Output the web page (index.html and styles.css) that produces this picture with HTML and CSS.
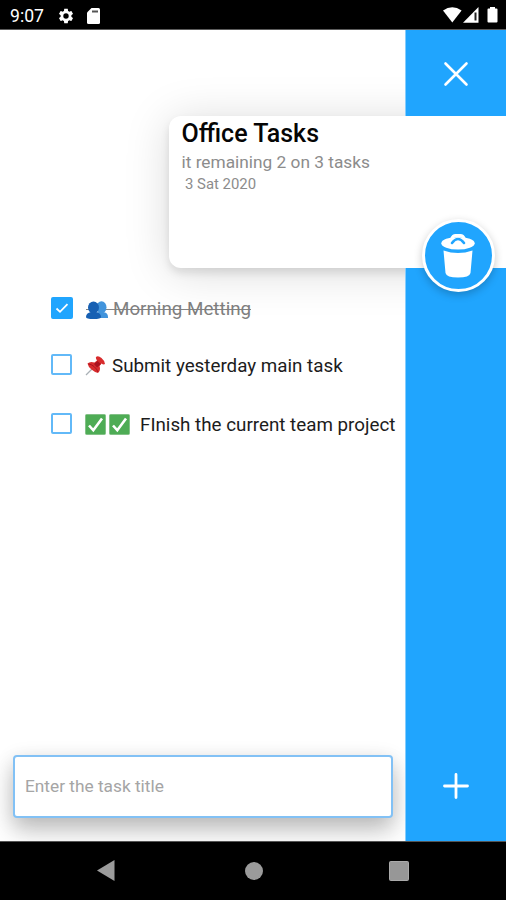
FILE: index.html
```html
<!DOCTYPE html>
<html lang="en">
<head>
<meta charset="utf-8">
<title>Office Tasks</title>
<link rel="stylesheet" href="styles.css">
</head>
<body>
<header class="status">
  <span class="clock">9:07</span>
  <svg class="gear" width="18" height="18" viewBox="0 0 24 24"><path fill="#fff" d="M19.14 12.94c.04-.3.06-.61.06-.94s-.02-.64-.07-.94l2.03-1.58c.18-.14.23-.41.12-.61l-1.92-3.32c-.12-.22-.37-.29-.59-.22l-2.39.96c-.5-.38-1.03-.7-1.62-.94L14.4 2.81c-.04-.24-.24-.41-.48-.41h-3.84c-.24 0-.43.17-.47.41l-.36 2.54c-.59.24-1.13.57-1.62.94l-2.39-.96c-.22-.08-.47 0-.59.22L2.74 8.87c-.12.21-.08.47.12.61l2.03 1.58c-.05.3-.09.63-.09.94s.02.64.07.94l-2.03 1.58c-.18.14-.23.41-.12.61l1.92 3.32c.12.22.37.29.59.22l2.39-.96c.5.38 1.03.7 1.62.94l.36 2.54c.05.24.24.41.48.41h3.84c.24 0 .44-.17.47-.41l.36-2.54c.59-.24 1.13-.56 1.62-.94l2.39.96c.22.08.47 0 .59-.22l1.92-3.32c.12-.22.07-.47-.12-.61zM12 15.6A3.6 3.6 0 1 1 12 8.4a3.6 3.6 0 0 1 0 7.2z"/></svg>
  <svg class="sd" width="13" height="16" viewBox="0 0 13 16"><path fill="#fff" d="M4.500 0h7Q13 0 13 1.500v13Q13 16 11.500 16h-10Q0 16 0 14.500V4.500z"/><path d="M5 3.500h6" stroke="#555" stroke-width="2"/></svg>
  <svg class="signals" width="55" height="17" viewBox="0 0 55 17"><path fill="#fff" d="M0 3.500Q9.300-3 18.600 3.500L9.300 15.500z"/><path fill="#fff" d="M20 15.700L35.500 0v15.700z"/><path fill="#222" d="M31.500 5.500h2v8h-2z"/><path fill="#fff" d="M47 0h5v1.500h1.500q1 0 1 1v12q0 1-1 1h-8q-1 0-1-1v-12q0-1 1-1H47z"/></svg>
</header>
<main class="screen">
  <button class="rail close" aria-label="Close"><svg width="26" height="26" viewBox="0 0 26 26"><path d="M2.500 2.500l21 21M23.500 2.500l-21 21" stroke="#fff" stroke-width="2.600" stroke-linecap="round"/></svg></button>
  <section class="card">
    <h1>Office Tasks</h1>
    <p class="remaining">it remaining 2 on 3 tasks</p>
    <p class="date">3 Sat 2020</p>
    <button class="trash" aria-label="Delete"><svg width="34" height="44" viewBox="0 0 34 44"><path fill="#fff" d="M2.500 16.500Q17 21.500 31.500 16.500L29.500 39Q28.500 43.500 17 43.500T4.500 39z"/><ellipse cx="17" cy="9.300" rx="16.700" ry="6.300" fill="#fff"/><path d="M10.500 5Q12 1.500 14.500 1.500h5Q22 1.500 23.500 5" fill="none" stroke="#fff" stroke-width="3"/><path d="M11 9Q14 5 17 5T23 9" fill="none" stroke="#20a5fe" stroke-width="2.600" stroke-linecap="round"/></svg></button>
  </section>
  <section class="body">
    <ul class="tasks">
      <li class="done"><span class="box checked"><svg width="16" height="16" viewBox="0 0 16 16"><path d="M2.500 8.500l3.500 3.300 7.500-7.600" fill="none" stroke="#fff" stroke-width="1.800"/></svg></span>
        <svg class="emoji people" width="22" height="18" viewBox="0 0 22 18"><path d="M9 16q0-4.500 4-5V9h4v2q5 .5 5 5v1H9z" fill="#4294dc"/><ellipse cx="15.500" cy="6.300" rx="5" ry="6" fill="#4294dc"/><path d="M0 16q0-4 5-5V9h5v2q5 1 5 5 0 2-7.500 2T0 16z" fill="#1760b3"/><ellipse cx="7.500" cy="6.500" rx="5.500" ry="6" fill="#1760b3"/></svg>
        <span class="label l1">Morning Metting</span></li>
      <li><span class="box"></span>
        <svg class="emoji" width="21" height="20" viewBox="0 0 21 20"><path d="M8 12L1 19" stroke="#a9b0b5" stroke-width="1.300"/><path d="M11 1q2-2 5.500 1t3.500 6q-1.500 1-3.500-.5l-2 2.500q1.500 5-1.500 7-3-.5-6.500-3.500T2.500 7.500Q5 5 9.500 6.500L12 4.500Q10.500 2.500 11 1z" fill="#d82c2d"/><path d="M12.500 5L16 8l-4 3.500L9 8z" fill="#a91320"/><path d="M3.500 8q2.500 0 5.500 2.500t4 5.500" stroke="#a91320" fill="none" stroke-width="1"/></svg>
        <span class="label l2">Submit yesterday main task</span></li>
      <li><span class="box last"></span>
        <svg class="emoji" width="45" height="21" viewBox="0 0 45 21"><g id="tick"><rect x=".5" y=".5" width="20" height="20" rx="1" fill="#4eac55" stroke="#83c187"/><path d="M4 11.500l4.300 4.800L17 4.500" fill="none" stroke="#fff" stroke-width="2.600"/></g><use href="#tick" x="24"/></svg>
        <span class="label l3">FInish the current team project</span></li>
    </ul>
    <form class="entry"><input class="field" type="text" placeholder="Enter the task title"></form>
  </section>
  <aside class="rail add"><svg width="26" height="26" viewBox="0 0 26 26"><path d="M13 1.500v23M1.500 13h23" stroke="#fff" stroke-width="2.800" stroke-linecap="round"/></svg></aside>
</main>
<nav class="nav">
  <svg width="18" height="21" viewBox="0 0 18 21"><path d="M0 10.500L17.500 0v21z" fill="#9b9b9b"/></svg>
  <svg width="18" height="18" viewBox="0 0 18 18"><circle cx="9" cy="9" r="9" fill="#9b9b9b"/></svg>
  <svg width="20" height="20" viewBox="0 0 20 20"><rect x=".5" y=".5" width="19" height="19" rx="1" fill="#979797" stroke="#aaa"/></svg>
</nav>
</body>
</html>
```
FILE: styles.css
```css
* { box-sizing: border-box; }
body { margin: 0; width: 506px; height: 900px; overflow: hidden; display: grid; grid-template-rows: 30px 811px 59px; font-family: Roboto, sans-serif; background: #000; }
h1, p, ul { margin: 0; padding: 0; }
button { border: 0; padding: 0; }
svg { display: block; flex: none; }
.status { display: flex; align-items: flex-start; padding: 7px 8px 0 10px; color: #fff; border-bottom: 1px solid #5c5c5c; }
.clock { width: 47px; font-size: 17.6px; line-height: 19px; }
.sd { margin: 1px 0 0 12px; }
.signals { margin-left: auto; }
.screen { position: relative; display: grid; grid-template: 86px 152px 1fr / 405px 101px; background: #fff; overflow: hidden; isolation: isolate; }
.rail { background: #20a5fe; border-left: 1px solid #86cdfd; z-index: 1; display: flex; justify-content: center; }
.close { grid-area: 1 / 2; align-items: center; padding-top: 2px; }
.card { position: relative; grid-area: 2 / 1 / 3 / 3; margin-left: 169px; padding: 4px 12.500px; border-radius: 12px 0 0 12px; background: #fff; box-shadow: 0 5px 8px rgba(0,0,0,.1), 0 4px 46px rgba(0,0,0,.15); }
.card h1 { font-size: 25px; line-height: 28px; font-weight: 500; color: #050505; white-space: nowrap; }
.remaining { margin-top: 4px; font-size: 17.3px; line-height: 20px; color: #8c8c8c; white-space: nowrap; }
.date { margin: 3px 0 0 3.500px; font-size: 14.900px; line-height: 18px; color: #8c8c8c; }
.trash { position: absolute; z-index: 3; left: 252.500px; top: 103px; width: 73px; height: 73px; border: 3px solid #fff; border-radius: 50%; background: #20a5fe; box-shadow: 0 3px 9px rgba(0,0,0,.22); display: grid; place-items: center; }
.body { grid-area: 3 / 1; min-width: 0; display: flex; flex-direction: column; justify-content: space-between; }
.tasks { list-style: none; padding: 28px 0 0 51px; }
.tasks li { display: flex; align-items: center; height: 24px; margin-bottom: 34px; white-space: nowrap; color: #1c1c1c; }
.box { width: 21px; height: 21px; flex: none; border: 2px solid #62b9f8; border-radius: 2px; margin: -3px 13px 0 0; }
.last { margin-top: -2px; }
.checked { width: 22px; height: 22px; margin: 0 13px 0 0; background: #20a5fe; border-color: #20a5fe; display: grid; place-items: center; }
.people { margin-top: 4px; }
.label { font-size: 18.8px; line-height: 24px; }
.l1 { margin: 2px 0 0 5px; }
.l2 { margin-left: 6px; }
.l3 { margin: 1px 0 0 10px; }
.tasks .done { color: #808080; background: linear-gradient(#858585, #858585) 35px 13px / 165px 1px no-repeat; }
.entry { margin: 0; padding: 0 13px 23px; }
.field { display: block; width: 380px; height: 63px; border: 2px solid #82c1f5; border-radius: 4px; padding: 0 10px 2px; font: 17.3px Roboto, sans-serif; color: #222; background: #fff; box-shadow: 0 14px 24px rgba(0,0,0,.2), 0 4px 20px rgba(0,0,0,.12); }
.field::placeholder { color: #a5a5a5; opacity: 1; }
.add { grid-area: 3 / 2; align-items: flex-end; padding-bottom: 42px; }
.nav { display: flex; align-items: center; padding: 0 97px 1px; justify-content: space-between; border-top: 1px solid #555; }
.nav svg:nth-child(2) { margin-left: 4px; }
```
